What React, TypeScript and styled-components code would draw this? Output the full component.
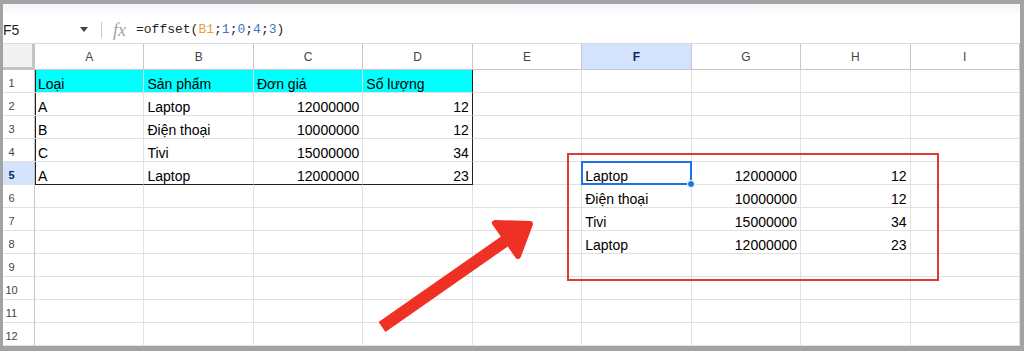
import styled, { createGlobalStyle } from "styled-components";

const COLS = ["A", "B", "C", "D", "E", "F", "G", "H", "I"];
const ACTIVE_COL = 5;
const ACTIVE_ROW = 4;

// 12 rows x 9 columns, empty string = blank cell
const DATA: string[][] = [
  ["Loại", "Sản phẩm", "Đơn giá", "Số lượng", "", "", "", "", ""],
  ["A", "Laptop", "12000000", "12", "", "", "", "", ""],
  ["B", "Điện thoại", "10000000", "12", "", "", "", "", ""],
  ["C", "Tivi", "15000000", "34", "", "", "", "", ""],
  ["A", "Laptop", "12000000", "23", "", "Laptop", "12000000", "12", ""],
  ["", "", "", "", "", "Điện thoại", "10000000", "12", ""],
  ["", "", "", "", "", "Tivi", "15000000", "34", ""],
  ["", "", "", "", "", "Laptop", "12000000", "23", ""],
  ["", "", "", "", "", "", "", "", ""],
  ["", "", "", "", "", "", "", "", ""],
  ["", "", "", "", "", "", "", "", ""],
  ["", "", "", "", "", "", "", "", ""],
];

const GlobalStyle = createGlobalStyle`
  * { box-sizing: border-box; }
  body {
    margin: 0;
    background: #a3a3a3;
    font-family: "Liberation Sans", Arial, sans-serif;
  }
`;

const Frame = styled.div`
  position: relative;
  width: 1024px;
  height: 351px;
  padding: 4px 4px 5px 3px;
  background: #a3a3a3;
  overflow: hidden;
`;

const Window = styled.div`
  height: 100%;
  display: flex;
  flex-direction: column;
  background: #fff;
`;

const FormulaBar = styled.div`
  height: 40px;
  flex: none;
  display: flex;
  align-items: center;
  padding-top: 12px;
  background: linear-gradient(#f3f5f9, #ffffff 12px);
  border-bottom: 1px solid #dadce0;
`;

const NameBox = styled.div`
  width: 98px;
  display: flex;
  align-items: center;
  justify-content: space-between;
  padding-right: 13px;
  font-size: 14px;
  line-height: 16px;
  color: #1f1f1f;
`;

const Caret = styled.span`
  width: 0;
  height: 0;
  border-left: 4px solid transparent;
  border-right: 4px solid transparent;
  border-top: 5px solid #444;
`;

const Divider = styled.span`
  width: 1px;
  height: 16px;
  background: #c7c7c7;
`;

const FxLabel = styled.span`
  margin-left: 11px;
  font-family: "Liberation Serif", "Times New Roman", serif;
  font-style: italic;
  font-size: 18px;
  line-height: 16px;
  color: #a0a4a8;
`;

const Formula = styled.span`
  margin-left: 10px;
  font-family: "Liberation Mono", "Courier New", monospace;
  font-size: 13px;
  line-height: 16px;
  color: #1f1f1f;
`;

const Token = styled.span<{ $color: string }>`
  color: ${(p) => p.$color};
`;

const Sheet = styled.div`
  flex: 1;
  display: grid;
  grid-template-columns: 32px repeat(9, 1fr);
  grid-template-rows: 26px repeat(12, 23px);
`;

const Corner = styled.div`
  background: #f1f1f1;
  border-right: 3px solid #c4c4c4;
  border-bottom: 3px solid #c4c4c4;
`;

const ColHead = styled.div<{ $active?: boolean }>`
  display: flex;
  align-items: center;
  justify-content: center;
  font-size: 12px;
  color: ${(p) => (p.$active ? "#0b2a5c" : "#444")};
  font-weight: ${(p) => (p.$active ? 700 : 400)};
  background: ${(p) => (p.$active ? "#d3e3fd" : "#fff")};
  border-right: 1px solid #c7c7c7;
  border-bottom: 1px solid #c7c7c7;
`;

const RowHead = styled.div<{ $active?: boolean }>`
  display: flex;
  align-items: center;
  justify-content: center;
  padding: 3px 14px 0 0;
  font-size: 11px;
  color: ${(p) => (p.$active ? "#0b2a5c" : "#444")};
  font-weight: ${(p) => (p.$active ? 700 : 400)};
  background: ${(p) => (p.$active ? "#d3e3fd" : "#fff")};
  border-right: 1px solid #c7c7c7;
  border-bottom: 1px solid #e1e1e1;
`;

const Cell = styled.div<{
  $fill?: string;
  $right?: boolean;
  $edgeL?: boolean;
  $edgeR?: boolean;
  $edgeB?: boolean;
}>`
  position: relative;
  display: flex;
  align-items: flex-end;
  justify-content: ${(p) => (p.$right ? "flex-end" : "flex-start")};
  padding: 0 3px;
  font-size: 14px;
  line-height: 16px;
  color: #000;
  white-space: nowrap;
  background: ${(p) => p.$fill ?? "#fff"};
  border-right: 1px solid ${(p) => (p.$edgeR ? "#1f1f1f" : "#e1e1e1")};
  border-bottom: 1px solid ${(p) => (p.$edgeB ? "#1f1f1f" : "#e1e1e1")};
  box-shadow: ${(p) => (p.$edgeL ? "inset 1px 0 0 #1f1f1f" : "none")};
`;

const Selection = styled.span`
  position: absolute;
  z-index: 2;
  inset: -1px -1px -1px -1px;
  border: 2px solid #1a73e8;
  pointer-events: none;
`;

const FillHandle = styled.span`
  position: absolute;
  right: -5px;
  bottom: -5px;
  width: 8px;
  height: 8px;
  border-radius: 50%;
  background: #1a73e8;
  border: 1px solid #fff;
`;

const Callout = styled.div`
  position: absolute;
  left: 567px;
  top: 153px;
  width: 372px;
  height: 128px;
  border: 2px solid #de3a3a;
  pointer-events: none;
`;

const ArrowLayer = styled.svg`
  position: absolute;
  left: 0;
  top: 0;
  pointer-events: none;
`;

const isNumber = (v: string) => /^\d+$/.test(v);

function App() {
  return (
    <Frame>
      <GlobalStyle />
      <Window>
        <FormulaBar>
          <NameBox>
            <span>F5</span>
            <Caret />
          </NameBox>
          <Divider />
          <FxLabel>fx</FxLabel>
          <Formula>
            =offset(<Token $color="#e8a23a">B1</Token>;
            <Token $color="#3c78c8">1</Token>;
            <Token $color="#3c78c8">0</Token>;
            <Token $color="#3c78c8">4</Token>;
            <Token $color="#3c78c8">3</Token>)
          </Formula>
        </FormulaBar>
        <Sheet>
          <Corner />
          {COLS.map((c, i) => (
            <ColHead key={c} $active={i === ACTIVE_COL}>
              {c}
            </ColHead>
          ))}
          {DATA.map((row, r) => [
            <RowHead key={`h${r}`} $active={r === ACTIVE_ROW}>
              {r + 1}
            </RowHead>,
            ...row.map((v, c) => {
              const inRange = r <= 4 && c <= 3;
              const selected = r === ACTIVE_ROW && c === ACTIVE_COL;
              return (
                <Cell
                  key={`${r}-${c}`}
                  $fill={r === 0 && c <= 3 ? "#00ffff" : undefined}
                  $right={isNumber(v)}
                  $edgeL={inRange && c === 0}
                  $edgeR={inRange && c === 3}
                  $edgeB={inRange && r === 4}
                >
                  {v}
                  {selected && (
                    <Selection>
                      <FillHandle />
                    </Selection>
                  )}
                </Cell>
              );
            }),
          ])}
        </Sheet>
      </Window>
      <Callout />
      <ArrowLayer width={1024} height={351} viewBox="0 0 1024 351">
        <line
          x1={382}
          y1={327}
          x2={508}
          y2={239}
          stroke="#ee3124"
          strokeWidth={12}
        />
        <polygon
          points="495,223 530,224 518,256"
          fill="#ee3124"
          stroke="#ee3124"
          strokeWidth={6}
          strokeLinejoin="round"
        />
      </ArrowLayer>
    </Frame>
  );
}

export default App;
